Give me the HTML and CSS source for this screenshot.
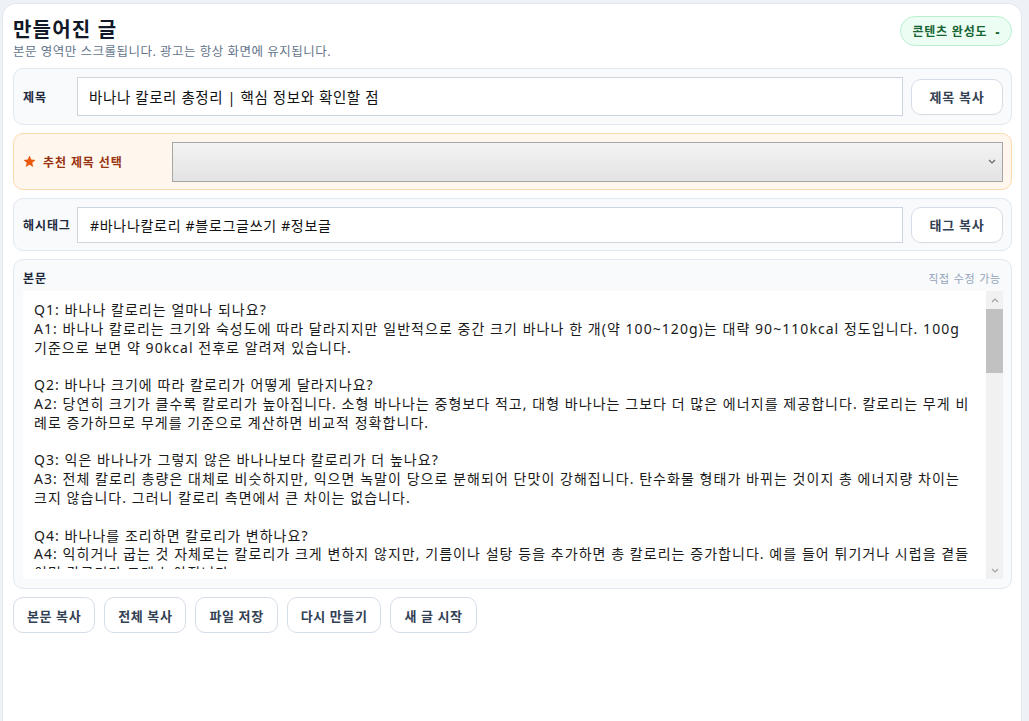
FILE: index.html
```html
<!DOCTYPE html>
<html lang="ko">
<head>
    <meta charset="UTF-8">
    <meta name="viewport" content="width=device-width, initial-scale=1.0">
    <title>만들어진 글</title>
    <link rel="stylesheet" href="styles.css">
</head>
<body>

    <main class="panel">
        <!-- 상단 제목 -->
        <header class="panel-head">
            <div>
                <h1>만들어진 글</h1>
                <p class="sub">본문 영역만 스크롤됩니다. 광고는 항상 화면에 유지됩니다.</p>
            </div>
            <span class="badge">콘텐츠 완성도 <b class="badge-score">-</b></span>
        </header>

        <!-- 제목 -->
        <div class="row-card">
            <label class="row-label" for="title-input">제목</label>
            <input type="text" id="title-input" class="title-input" value="바나나 칼로리 총정리 | 핵심 정보와 확인할 점">
            <button class="btn">제목 복사</button>
        </div>

        <!-- 추천 제목 -->
        <div class="row-card pick-card">
            <label class="row-label pick-label" for="pick-select">
                <svg class="star" viewBox="0 0 24 24" width="13" height="13"><path d="M12 1l3.2 7.3 7.9.7-6 5.2 1.8 7.8L12 17.9l-6.9 4.1 1.8-7.8-6-5.2 7.9-.7z" fill="#ea580c"/></svg>
                추천 제목 선택
            </label>
            <select id="pick-select" class="pick-select">
                <option></option>
            </select>
        </div>

        <!-- 해시태그 -->
        <div class="row-card tag-card">
            <label class="row-label" for="tag-input">해시태그</label>
            <input type="text" id="tag-input" class="tag-input" value="#바나나칼로리 #블로그글쓰기 #정보글">
            <button class="btn">태그 복사</button>
        </div>

        <!-- 본문 -->
        <section class="body-card">
            <div class="body-head">
                <span class="row-label">본문</span>
                <span class="hint">직접 수정 가능</span>
            </div>
            <div class="editor">
                <textarea class="body-text" spellcheck="false">
Q1: 바나나 칼로리는 얼마나 되나요?
A1: 바나나 칼로리는 크기와 숙성도에 따라 달라지지만 일반적으로 중간 크기 바나나 한 개(약 100~120g)는 대략 90~110kcal 정도입니다. 100g 기준으로 보면 약 90kcal 전후로 알려져 있습니다.

Q2: 바나나 크기에 따라 칼로리가 어떻게 달라지나요?
A2: 당연히 크기가 클수록 칼로리가 높아집니다. 소형 바나나는 중형보다 적고, 대형 바나나는 그보다 더 많은 에너지를 제공합니다. 칼로리는 무게 비례로 증가하므로 무게를 기준으로 계산하면 비교적 정확합니다.

Q3: 익은 바나나가 그렇지 않은 바나나보다 칼로리가 더 높나요?
A3: 전체 칼로리 총량은 대체로 비슷하지만, 익으면 녹말이 당으로 분해되어 단맛이 강해집니다. 탄수화물 형태가 바뀌는 것이지 총 에너지량 차이는 크지 않습니다. 그러니 칼로리 측면에서 큰 차이는 없습니다.

Q4: 바나나를 조리하면 칼로리가 변하나요?
A4: 익히거나 굽는 것 자체로는 칼로리가 크게 변하지 않지만, 기름이나 설탕 등을 추가하면 총 칼로리는 증가합니다. 예를 들어 튀기거나 시럽을 곁들이면 칼로리가 크게 높아집니다.

Q5: 바나나 칼로리는 다른 과일과 비교하면 어떤가요?
A5: 사과나 귤 같은 과일보다 무게 대비 칼로리가 조금 높은 편입니다. 하지만 포만감이 좋고 식이섬유와 칼륨이 풍부해 간식으로 적당히 먹기에 좋은 과일입니다.

Q6: 다이어트 중에 바나나를 먹어도 되나요?
A6: 하루 한두 개 정도는 크게 문제가 되지 않습니다. 운동 전후 간식이나 아침 대용으로 활용하면 좋고, 다른 간식을 대체하는 방식으로 먹으면 총 섭취 칼로리를 관리하기 쉽습니다.

Q7: 바나나 한 개에 들어 있는 당은 어느 정도인가요?
A7: 중간 크기 바나나 한 개에는 대략 12~15g 정도의 당이 들어 있습니다. 익을수록 당 비율이 높아지므로 혈당 관리가 필요하다면 덜 익은 바나나를 선택하는 것도 방법입니다.

Q8: 바나나를 말리면 칼로리가 달라지나요?
A8: 수분이 빠지면서 같은 무게 기준 칼로리가 크게 높아집니다. 바나나칩은 기름에 튀기는 경우가 많아 생바나나보다 훨씬 높은 칼로리를 가지므로 양을 조절하는 것이 좋습니다.

Q9: 바나나 우유나 스무디의 칼로리는 어떤가요?
A9: 우유, 요거트, 꿀 등 함께 넣는 재료에 따라 칼로리가 달라집니다. 바나나 한 개와 우유 한 컵을 넣으면 보통 200kcal 이상이 되므로 재료를 확인하는 것이 좋습니다.

Q10: 바나나는 언제 먹는 것이 가장 좋나요?
A10: 빠르게 에너지를 보충할 수 있어 운동 전이나 아침 시간에 먹기 좋습니다. 늦은 밤에는 다른 음식과 함께 과하게 먹지 않도록 주의하는 것이 좋습니다.

Q11: 바나나 칼로리를 정확하게 계산하는 방법이 있나요?
A11: 껍질을 제외한 과육 무게를 잰 뒤 100g당 약 90kcal를 기준으로 계산하면 됩니다. 주방 저울을 활용하면 크기 차이에 따른 오차를 줄일 수 있습니다.

Q12: 초록색 바나나는 칼로리가 더 낮나요?
A12: 덜 익은 바나나는 저항성 전분이 많아 소화가 천천히 되는 편입니다. 칼로리 자체는 크게 다르지 않지만 혈당이 완만하게 오르는 장점이 있습니다.

Q13: 바나나를 냉동하면 칼로리가 변하나요?
A13: 냉동은 칼로리에 영향을 주지 않습니다. 얼린 바나나는 스무디나 아이스크림 대용으로 활용하기 좋으며, 설탕을 더하지 않으면 칼로리 부담도 적습니다.

정리하면, 바나나는 한 개 기준 약 90~110kcal 수준으로 간식으로 먹기에 부담이 적은 과일입니다. 크기와 조리 방법, 함께 먹는 재료에 따라 칼로리가 달라질 수 있으니 필요에 맞게 확인하고 섭취하시기 바랍니다.</textarea>
                <!-- 스크롤바 모양 -->
                <div class="scroll-col">
                    <span class="scroll-btn up"></span>
                    <div class="scroll-track">
                        <span class="scroll-thumb"></span>
                    </div>
                    <span class="scroll-btn down"></span>
                </div>
            </div>
        </section>

        <!-- 하단 버튼 -->
        <div class="actions">
            <button class="btn">본문 복사</button>
            <button class="btn">전체 복사</button>
            <button class="btn">파일 저장</button>
            <button class="btn">다시 만들기</button>
            <button class="btn">새 글 시작</button>
        </div>
    </main>

</body>
</html>
```

FILE: styles.css
```css
/* 기본 */
html, body {
    height: 100%;
}
body {
    margin: 0;
    padding: 3px 7px 0 2px;
    box-sizing: border-box;
    background-color: #eef2f7;
    font-family: 'Noto Sans', 'Noto Sans CJK KR', sans-serif;
    color: #1e293b;
    overflow: hidden;
}

/* 패널 */
.panel {
    box-sizing: border-box;
    min-height: 100%;
    background: #fff;
    border: 1px solid #e2e8f0;
    border-bottom: none;
    border-radius: 14px 14px 0 0;
    padding: 12px 9px 0 10px;
}

.panel-head {
    display: flex;
    justify-content: space-between;
    align-items: flex-start;
    margin-bottom: 7px;
}
.panel-head h1 {
    margin: 0;
    font-size: 20px;
    line-height: 27px;
    font-weight: 700;
    letter-spacing: 1.2px;
    color: #111827;
}
.sub {
    margin: 0;
    font-size: 12.5px;
    line-height: 18px;
    letter-spacing: 0.5px;
    color: #64748b;
}

.badge {
    display: inline-flex;
    align-items: center;
    height: 30px;
    box-sizing: border-box;
    padding: 0 11px;
    border: 1px solid #b9efcd;
    border-radius: 15px;
    background: #ecfdf3;
    color: #166534;
    font-size: 12px;
    font-weight: 700;
    letter-spacing: 0.8px;
}
.badge-score {
    margin-left: 8px;
}

/* 입력 행 */
.row-card {
    box-sizing: border-box;
    height: 57px;
    display: flex;
    align-items: center;
    gap: 8px;
    padding: 0 8px 0 9px;
    margin-bottom: 8px;
    background: #f8fafc;
    border: 1px solid #e2e8f0;
    border-radius: 10px;
}
.tag-card {
    height: 53px;
}
.row-label {
    width: 46px;
    flex-shrink: 0;
    font-size: 12px;
    font-weight: 700;
    letter-spacing: 0.9px;
    color: #1e293b;
    white-space: nowrap;
}

.title-input,
.tag-input {
    flex: 1;
    min-width: 0;
    box-sizing: border-box;
    border: 1px solid #cbd5e1;
    background: #fff;
    padding: 0 11px;
    font-family: inherit;
    letter-spacing: 0.6px;
    color: #111;
    outline: none;
}
.title-input {
    height: 39px;
    font-size: 14.5px;
}
.tag-input {
    height: 36px;
    font-size: 14px;
    padding-left: 12px;
    letter-spacing: 0.7px;
}

.btn {
    height: 36px;
    padding: 0 13px;
    background: #fff;
    border: 1px solid #d5dde8;
    border-radius: 10px;
    font-family: inherit;
    font-size: 13px;
    font-weight: 700;
    letter-spacing: 0.6px;
    color: #334155;
    cursor: pointer;
    white-space: nowrap;
}
.row-card .btn {
    width: 92px;
    flex-shrink: 0;
    letter-spacing: 0.8px;
}

/* 추천 제목 */
.pick-card {
    background: #fff6ed;
    border-color: #fdd9ae;
}
.pick-label {
    width: 141px;
    display: flex;
    align-items: center;
    gap: 7px;
    color: #9a3412;
}
.pick-select {
    flex: 1;
    height: 40px;
    border: 1px solid #a6a6a6;
    border-radius: 0;
    -webkit-appearance: none;
    appearance: none;
    background:
        url("data:image/svg+xml,%3Csvg xmlns='http://www.w3.org/2000/svg' width='8' height='5' viewBox='0 0 8 5'%3E%3Cpath d='M1 1l3 3 3-3' fill='none' stroke='%23666' stroke-width='1.2'/%3E%3C/svg%3E") no-repeat right 6px center,
        linear-gradient(#f3f3f3, #e3e3e3);
    outline: none;
}

/* 본문 */
.body-card {
    box-sizing: border-box;
    height: 330px;
    padding: 9px 8px 9px 9px;
    margin-bottom: 8px;
    background: #f8fafc;
    border: 1px solid #e2e8f0;
    border-radius: 10px;
}
.body-head {
    display: flex;
    justify-content: space-between;
    align-items: center;
    height: 18px;
    margin-bottom: 4px;
}
.hint {
    font-size: 11px;
    letter-spacing: 0.8px;
    color: #94a3b8;
    margin-right: 2px;
}

.editor {
    display: flex;
    height: 288px;
    background: #fff;
}
.body-text {
    flex: 1;
    min-width: 0;
    height: 278px;
    box-sizing: border-box;
    border: none;
    outline: none;
    resize: none;
    background: #fff;
    padding: 10px 11px 0 11px;
    font-family: inherit;
    font-size: 14px;
    line-height: 18.8px;
    letter-spacing: 1.05px;
    color: #1a1a1a;
    overflow-y: hidden;
    scrollbar-width: none;
}

/* 스크롤바 모양 */
.scroll-col {
    width: 17px;
    display: flex;
    flex-direction: column;
    background: #f1f1f1;
}
.scroll-btn {
    height: 18px;
    background-repeat: no-repeat;
    background-position: center;
}
.scroll-btn.up {
    background-image: url("data:image/svg+xml,%3Csvg xmlns='http://www.w3.org/2000/svg' width='8' height='5' viewBox='0 0 8 5'%3E%3Cpath d='M1 4l3-3 3 3' fill='none' stroke='%23a3a3a3' stroke-width='1.2'/%3E%3C/svg%3E");
}
.scroll-btn.down {
    background-image: url("data:image/svg+xml,%3Csvg xmlns='http://www.w3.org/2000/svg' width='8' height='5' viewBox='0 0 8 5'%3E%3Cpath d='M1 1l3 3 3-3' fill='none' stroke='%23a3a3a3' stroke-width='1.2'/%3E%3C/svg%3E");
}
.scroll-track {
    flex: 1;
}
.scroll-thumb {
    display: block;
    height: 64px;
    background: #c1c1c1;
}

/* 하단 버튼 */
.actions {
    display: flex;
    gap: 9px;
}
```
